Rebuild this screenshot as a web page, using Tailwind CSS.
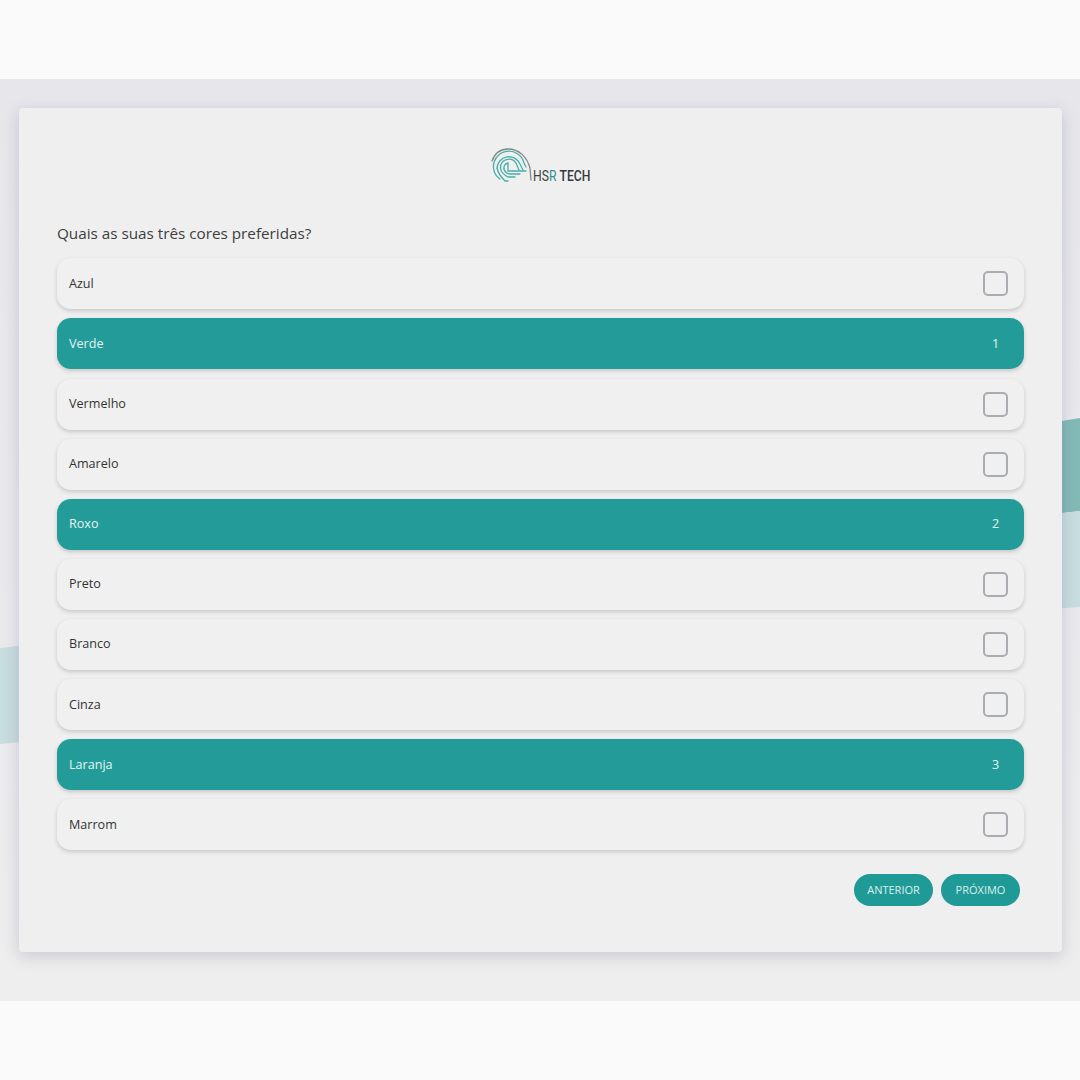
<!DOCTYPE html>
<html lang="pt-BR">
<head>
    <meta charset="UTF-8">
    <title>Pesquisa - HSR Tech</title>
    <script src="https://cdn.jsdelivr.net/npm/@tailwindcss/browser@4"></script>
</head>
<body class="bg-[#fafafa] font-['Open_Sans',sans-serif]">
    <div class="h-[1080px] pt-[79px] overflow-hidden">
        <section class="relative h-[922px] pl-[19px] pr-[18px] pt-[29px] bg-gradient-to-b from-[#e6e6eb] via-[#e9e9ed] to-[#eeeeee]">
            <!-- faixas do fundo -->
            <svg class="absolute left-0 top-0" width="1080" height="922" viewBox="0 0 1080 922">
                <path d="M1040 346 Q1060 342 1080 339 V432 Q1060 434 1040 437 Z" fill="#84bab6"/>
                <path d="M1040 437 Q1060 434 1080 432 V528 Q1060 529 1040 532 Z" fill="#c8dde0"/>
                <path d="M0 569 Q10 568 30 565 V662 Q10 664 0 665 Z" fill="#c8dde0"/>
            </svg>

            <main class="relative h-[844px] rounded-[4px] bg-[#efefef] px-[38px] pt-[38px] shadow-[0_4px_16px_rgba(70,70,110,0.22)]">
                <!-- logo -->
                <div class="flex h-[44px] justify-center">
                    <div class="relative h-[44px] w-[102px]">
                        <svg class="absolute left-0 top-0" width="60" height="44" viewBox="0 0 60 44" fill="none" stroke-linecap="round">
                            <path d="M2 15 C5 7 11 3 18 3 C29 3 37 11 40 22 L41 34" stroke="#85888a" stroke-width="1.3"/>
                            <path d="M3.5 22 A15.5 15.5 0 0 1 34 17 L36 21" stroke="#4aaeaa" stroke-width="1.3"/>
                            <path d="M7 22 A12 12 0 0 1 30 18 L33 24" stroke="#4aaeaa" stroke-width="1.3"/>
                            <path d="M10.5 22 A8.5 8.5 0 0 1 26 17 L29 24" stroke="#4aaeaa" stroke-width="1.3"/>
                            <path d="M14 23 A5 5 0 0 1 18 17 V25 H36" stroke="#4aaeaa" stroke-width="1.3"/>
                            <path d="M3.5 22 C4 27 7 31 10 33" stroke="#4aaeaa" stroke-width="1.3"/>
                            <path d="M7 22 C8 27 11 31 15 35 H18" stroke="#4aaeaa" stroke-width="1.3"/>
                            <path d="M10.5 22 C11 26 14 29 18 31 H25" stroke="#4aaeaa" stroke-width="1.3"/>
                            <path d="M14 23 C15 26 17 28 20 28 H30" stroke="#4aaeaa" stroke-width="1.3"/>
                        </svg>
                        <span class="absolute left-[43px] top-[20px] text-[14px] leading-[20px] whitespace-nowrap font-['Roboto',sans-serif] scale-x-[0.87] origin-left">
                            <span class="text-[#2f8f8b]"><span class="text-[#3d4446]">HS</span>R</span> <span class="font-medium text-[#333a3c]">TECH</span>
                        </span>
                    </div>
                </div>

                <h1 class="mt-[32px] mb-[14.4px] text-[15.25px] leading-[22px] text-[#3d3d3d]">Quais as suas três cores preferidas?</h1>

                <ul class="flex flex-col gap-[9.1px]">
                    <li class="flex h-[51px] items-center justify-between rounded-[14px] bg-[#f0f0f0] pl-[12px] pr-[16px] text-[12.6px] leading-[20px] text-[#333] shadow-[0_2px_4px_rgba(0,0,0,0.17)]">
                        <span>Azul</span>
                        <span class="size-[25px] rounded-[5px] border-2 border-[#a9adb2]"></span>
                    </li>
                    <li class="flex h-[51px] items-center justify-between rounded-[14px] bg-[#239c99] pl-[12px] pr-[16px] text-[12.6px] leading-[20px] text-[#e4f4f3] shadow-[0_2px_4px_rgba(0,0,0,0.17)]">
                        <span>Verde</span>
                        <span class="w-[25px] text-center">1</span>
                    </li>
                    <li class="flex h-[51px] items-center justify-between rounded-[14px] bg-[#f0f0f0] pl-[12px] pr-[16px] text-[12.6px] leading-[20px] text-[#333] shadow-[0_2px_4px_rgba(0,0,0,0.17)]">
                        <span>Vermelho</span>
                        <span class="size-[25px] rounded-[5px] border-2 border-[#a9adb2]"></span>
                    </li>
                    <li class="flex h-[51px] items-center justify-between rounded-[14px] bg-[#f0f0f0] pl-[12px] pr-[16px] text-[12.6px] leading-[20px] text-[#333] shadow-[0_2px_4px_rgba(0,0,0,0.17)]">
                        <span>Amarelo</span>
                        <span class="size-[25px] rounded-[5px] border-2 border-[#a9adb2]"></span>
                    </li>
                    <li class="flex h-[51px] items-center justify-between rounded-[14px] bg-[#239c99] pl-[12px] pr-[16px] text-[12.6px] leading-[20px] text-[#e4f4f3] shadow-[0_2px_4px_rgba(0,0,0,0.17)]">
                        <span>Roxo</span>
                        <span class="w-[25px] text-center">2</span>
                    </li>
                    <li class="flex h-[51px] items-center justify-between rounded-[14px] bg-[#f0f0f0] pl-[12px] pr-[16px] text-[12.6px] leading-[20px] text-[#333] shadow-[0_2px_4px_rgba(0,0,0,0.17)]">
                        <span>Preto</span>
                        <span class="size-[25px] rounded-[5px] border-2 border-[#a9adb2]"></span>
                    </li>
                    <li class="flex h-[51px] items-center justify-between rounded-[14px] bg-[#f0f0f0] pl-[12px] pr-[16px] text-[12.6px] leading-[20px] text-[#333] shadow-[0_2px_4px_rgba(0,0,0,0.17)]">
                        <span>Branco</span>
                        <span class="size-[25px] rounded-[5px] border-2 border-[#a9adb2]"></span>
                    </li>
                    <li class="flex h-[51px] items-center justify-between rounded-[14px] bg-[#f0f0f0] pl-[12px] pr-[16px] text-[12.6px] leading-[20px] text-[#333] shadow-[0_2px_4px_rgba(0,0,0,0.17)]">
                        <span>Cinza</span>
                        <span class="size-[25px] rounded-[5px] border-2 border-[#a9adb2]"></span>
                    </li>
                    <li class="flex h-[51px] items-center justify-between rounded-[14px] bg-[#239c99] pl-[12px] pr-[16px] text-[12.6px] leading-[20px] text-[#e4f4f3] shadow-[0_2px_4px_rgba(0,0,0,0.17)]">
                        <span>Laranja</span>
                        <span class="w-[25px] text-center">3</span>
                    </li>
                    <li class="flex h-[51px] items-center justify-between rounded-[14px] bg-[#f0f0f0] pl-[12px] pr-[16px] text-[12.6px] leading-[20px] text-[#333] shadow-[0_2px_4px_rgba(0,0,0,0.17)]">
                        <span>Marrom</span>
                        <span class="size-[25px] rounded-[5px] border-2 border-[#a9adb2]"></span>
                    </li>
                </ul>

                <div class="mt-[23.6px] flex justify-end gap-[8px] pr-[4px]">
                    <button class="h-[32px] w-[79px] rounded-full bg-[#209a96] text-[11px] text-[#d9f1ef]">ANTERIOR</button>
                    <button class="h-[32px] w-[79px] rounded-full bg-[#209a96] text-[11px] text-[#d9f1ef]">PRÓXIMO</button>
                </div>
            </main>
        </section>
    </div>
</body>
</html>
